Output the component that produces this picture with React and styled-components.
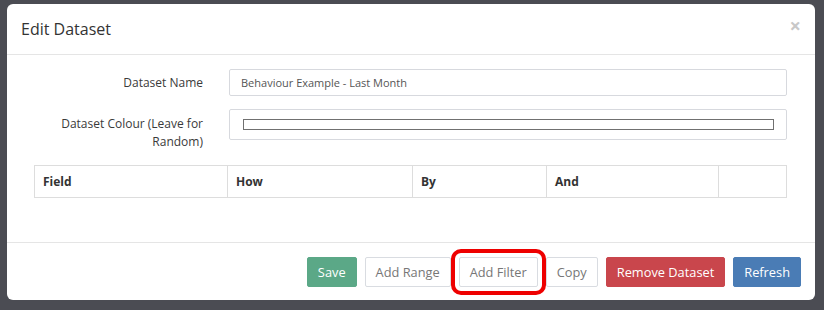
import React from "react";
import styled, { createGlobalStyle } from "styled-components";

const Global = createGlobalStyle`
  html, body { margin: 0; padding: 0; background: #4b4c53; }
  body { font-family: "Open Sans", "Liberation Sans", sans-serif; color: #333; }
  * { box-sizing: border-box; }
`;

const Page = styled.div`
  width: 824px;
  height: 310px;
  padding: 4px 9px 10px 7px;
  background: #4b4c53;
`;

const Modal = styled.div`
  width: 808px;
  height: 296px;
  background: #fff;
  border-radius: 6px;
  display: flex;
  flex-direction: column;
  overflow: hidden;
`;

const Header = styled.div`
  height: 51px;
  border-bottom: 1px solid #e5e5e5;
  display: flex;
  align-items: center;
  justify-content: space-between;
  padding: 0 14px 0 14px;
`;

const Title = styled.h4`
  margin: 0;
  font-size: 16px;
  font-weight: 400;
  color: #333;
  line-height: 20px;
`;

const Close = styled.span`
  font-size: 20px;
  font-weight: 700;
  color: #c8c8c8;
  line-height: 1;
  margin-top: -6px;
`;

const Body = styled.div`
  flex: 1;
  padding: 14px 28px 0 27px;
  border-bottom: 1px solid #e5e5e5;
`;

const FormRow = styled.div`
  display: grid;
  grid-template-columns: 169px 1fr;
  column-gap: 26px;
  margin-bottom: ${(p) => p.$mb || 0}px;
`;

const Label = styled.label`
  text-align: right;
  font-size: 12px;
  line-height: 18px;
  padding-top: ${(p) => p.$pt || 5}px;
  color: #3a3a3a;
`;

const TextInput = styled.div`
  height: ${(p) => p.$h || 27}px;
  border: 1px solid #d7d9de;
  border-radius: 2px;
  font-size: 11px;
  color: #555;
  display: flex;
  align-items: center;
  padding: 0 11px;
`;

const ColourBar = styled.div`
  height: 11px;
  width: 100%;
  border: 1px solid #707070;
  margin-left: 2px;
  margin-right: 1px;
`;

const Table = styled.div`
  margin-top: 14px;
  display: grid;
  grid-template-columns: 192px 185px 134px 172px 1fr;
  border: 1px solid #ddd;
  height: 33px;
`;

const Th = styled.div`
  font-size: 12px;
  font-weight: 700;
  color: #333;
  padding-left: 8px;
  display: flex;
  align-items: center;
  border-left: ${(p) => (p.$first ? "none" : "1px solid #ddd")};
`;

const Footer = styled.div`
  height: 57px;
  display: flex;
  justify-content: flex-end;
  align-items: flex-start;
  padding: 14px 14px 0 0;
  gap: 8px;
`;

const variants = {
  success: { bg: "#5ba887", border: "#5ba887", color: "#fff" },
  danger: { bg: "#c9464c", border: "#c9464c", color: "#fff" },
  primary: { bg: "#4a7cb5", border: "#4a7cb5", color: "#fff" },
  default: { bg: "#fff", border: "#d9dce1", color: "#777" },
};

const Button = styled.button`
  height: 30px;
  padding: 0 10px;
  font-family: "Open Sans", "Liberation Sans", sans-serif;
  font-size: 12.8px;
  border-radius: 2px;
  border: 1px solid ${(p) => variants[p.$v].border};
  background: ${(p) => variants[p.$v].bg};
  color: ${(p) => variants[p.$v].color};
  ${(p) =>
    p.$highlight &&
    `outline: 4px solid #ee0000; outline-offset: 4px;`}
`;

export default function App() {
  return (
    <>
      <Global />
      <Page>
        <Modal>
          <Header>
            <Title>Edit Dataset</Title>
            <Close>×</Close>
          </Header>
          <Body>
            <FormRow $mb={13}>
              <Label $pt={5}>Dataset Name</Label>
              <TextInput $h={27}>Behaviour Example - Last Month</TextInput>
            </FormRow>
            <FormRow>
              <Label $pt={6}>Dataset Colour (Leave for Random)</Label>
              <TextInput $h={31}>
                <ColourBar />
              </TextInput>
            </FormRow>
            <Table>
              <Th $first>Field</Th>
              <Th>How</Th>
              <Th>By</Th>
              <Th>And</Th>
              <Th />
            </Table>
          </Body>
          <Footer>
            <Button $v="success">Save</Button>
            <Button $v="default">Add Range</Button>
            <Button $v="default" $highlight>Add Filter</Button>
            <Button $v="default">Copy</Button>
            <Button $v="danger">Remove Dataset</Button>
            <Button $v="primary">Refresh</Button>
          </Footer>
        </Modal>
      </Page>
    </>
  );
}
